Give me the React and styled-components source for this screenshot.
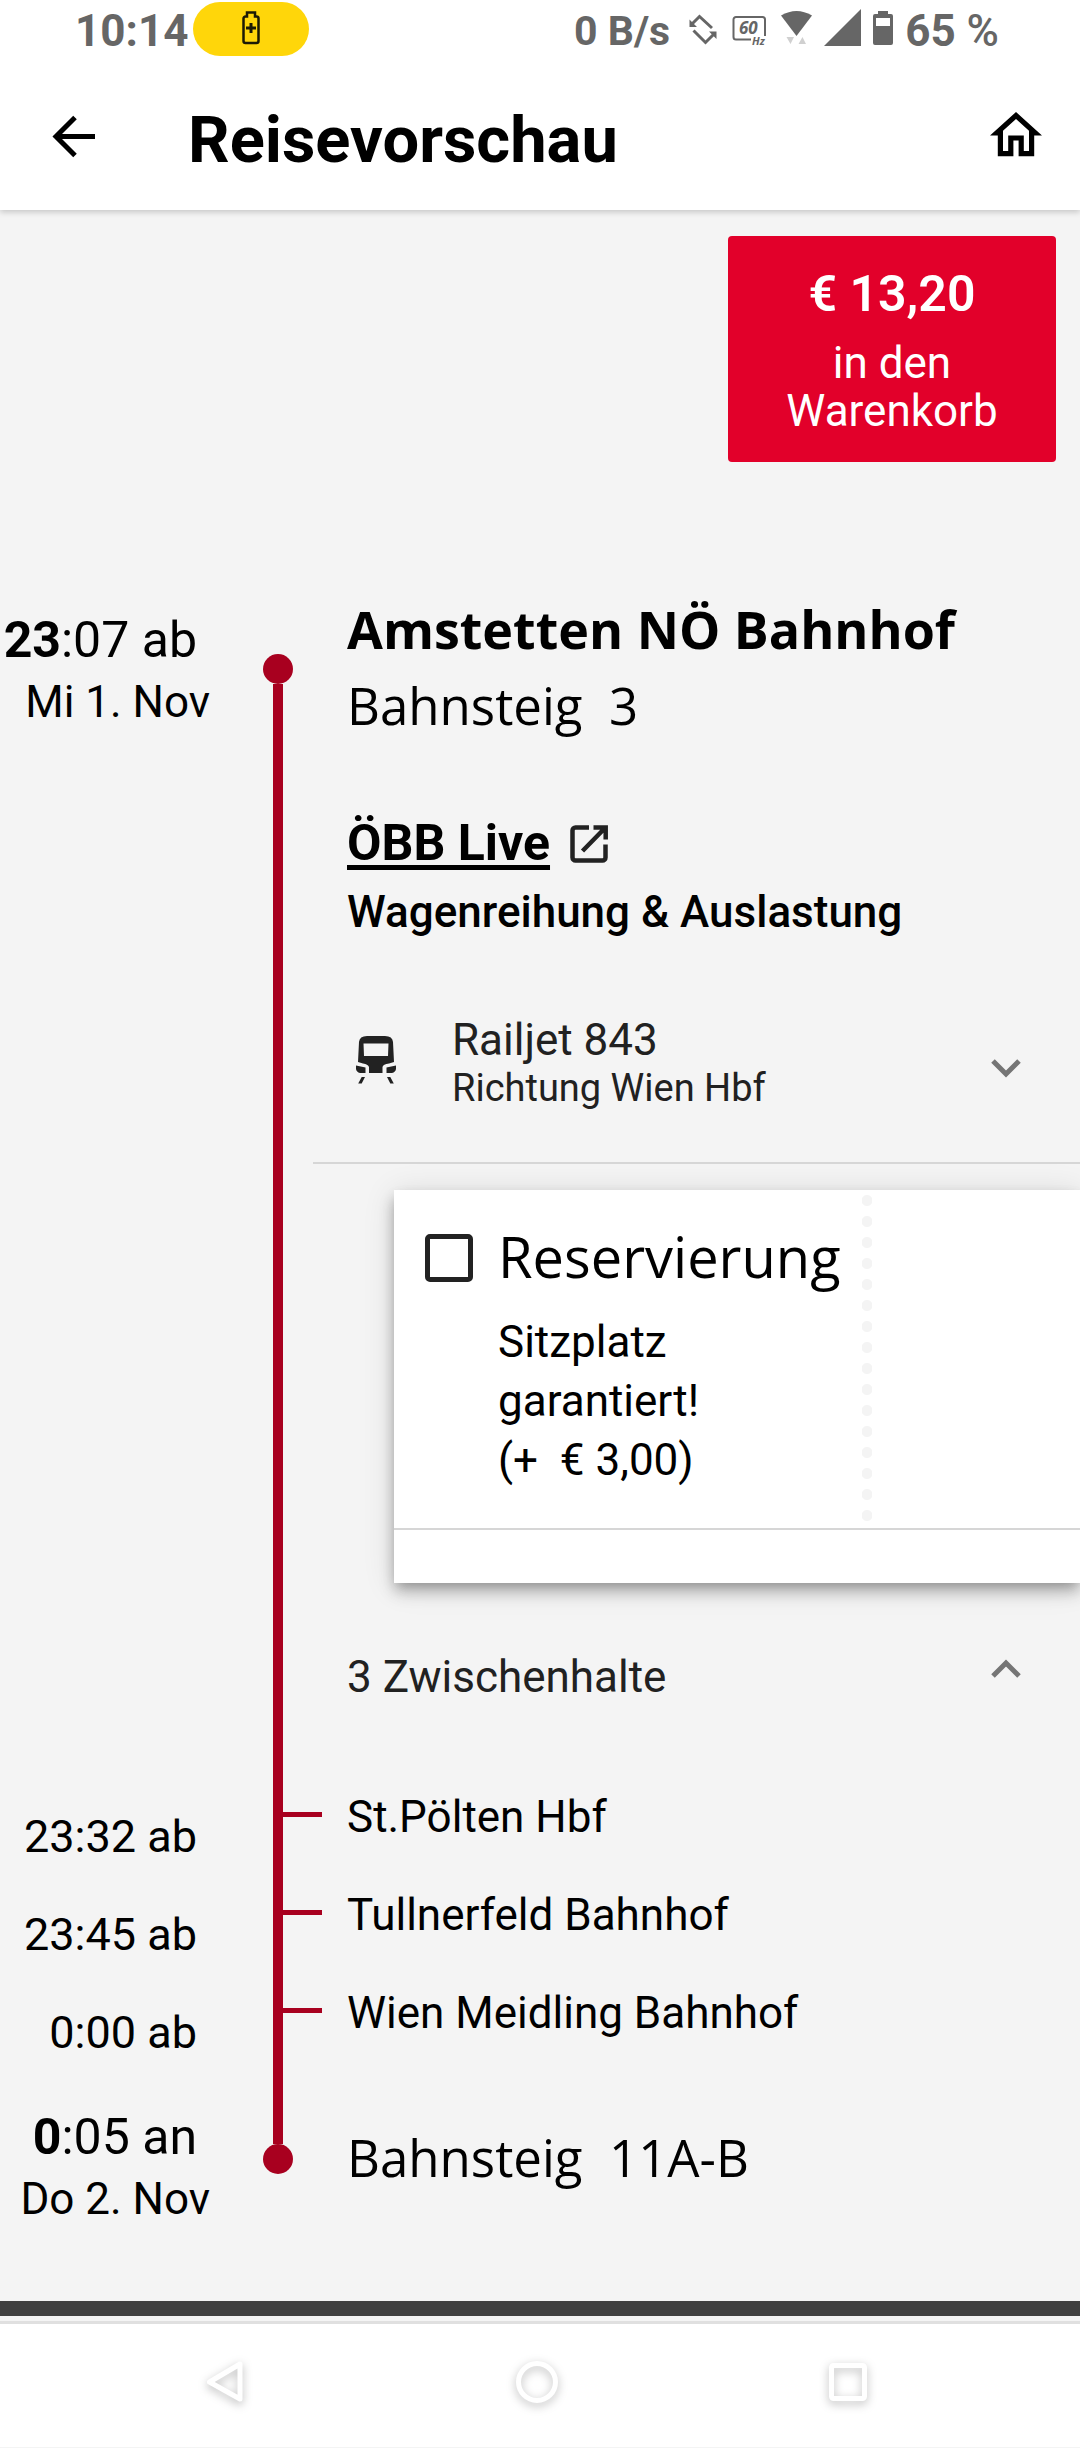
import { useState } from "react"
import styled, { createGlobalStyle } from "styled-components"

const GlobalStyle = createGlobalStyle`
    :root {
        --main-color: #e2002a;
        --line-color: #a8001f;
        --title-color: #000;
        --text-color: #212121;
        --status-color: #666;
        --border-color: #d6d6d6;
        --background: #f4f4f4;
        --heading-font: "Open Sans", "Noto Sans", sans-serif;
    }

    * {
        box-sizing: border-box;
        margin: 0;
        padding: 0;
    }

    body {
        background-color: var(--background);
        color: var(--title-color);
        font-family: Roboto, "Liberation Sans", sans-serif;
        font-size: 44px;
        line-height: 60px;
        overflow-x: hidden;
    }

    button {
        background: none;
        border: none;
        color: inherit;
        font: inherit;
        cursor: pointer;
    }

    svg {
        display: block;
        flex-shrink: 0;
    }
`

const Header = styled.header`
    background-color: #fff;
    box-shadow: 0 2px 6px rgba(0, 0, 0, 0.2);
`

const StatusBar = styled.div`
    height: 60px;
    display: flex;
    justify-content: space-between;
    padding: 2px 81px 0 75px;
    color: var(--status-color);
    line-height: 58px;
    font-weight: 700;
`

const StatusGroup = styled.div`
    display: flex;
    gap: ${({ $gap }) => $gap}px;
`

const Speed = styled.span`
    font-size: 41px;
`

const Percent = styled.span`
    font-weight: 500;
`

const Pill = styled.span`
    width: 116px;
    height: 54px;
    border-radius: 27px;
    background-color: #ffd60a;
    display: flex;
    justify-content: center;
`

const AppBar = styled.div`
    height: 150px;
    display: flex;
    padding: 43px 28px 0 38px;
`

const IconButton = styled.button`
    width: 72px;
    height: 72px;
`

const Title = styled.h1`
    flex: 1;
    padding-left: 78px;
    font-size: 65px;
    line-height: 74px;
    font-weight: 700;
`

const Main = styled.main`
    padding: 26px 0 71px;
`

const CartButton = styled.button`
    width: 328px;
    display: flex;
    flex-direction: column;
    gap: 15px;
    margin: 0 24px 129px auto;
    padding: 28px 48px 27px;
    border-radius: 4px;
    background-color: var(--main-color);
    color: #fff;
    line-height: 48px;
    text-align: center;
`

const Price = styled.span`
    width: 100%;
    font-size: 50px;
    line-height: 60px;
    font-weight: 600;
`

const Row = styled.div`
    display: grid;
    grid-template-columns: 210px 103px minmax(0, 1fr);
    min-height: ${({ $height }) => ($height ? `${$height}px` : "auto")};
`

const TimeCell = styled.div`
    padding-top: ${({ $top }) => $top}px;
    text-align: right;
    white-space: nowrap;
`

const Time = styled.p`
    padding-right: 13px;
    font-size: ${({ $big }) => ($big ? 50 : 45)}px;
    line-height: ${({ $big }) => ($big ? 62 : 60)}px;
`

const DateText = styled.p`
    line-height: 62px;
`

const Rail = styled.div`
    display: flex;
    flex-direction: column;
    align-items: center;
    width: 30px;
    margin-left: 53px;
    padding-top: ${({ $top = 0 }) => $top}px;
`

const StopRail = styled.div`
    display: flex;
    padding-left: 63px;
`

const Dot = styled.span`
    width: 30px;
    height: 30px;
    border-radius: 50%;
    background-color: var(--line-color);
`

const Line = styled.span`
    width: 10px;
    flex: ${({ $length }) => ($length ? `0 0 ${$length}px` : "1")};
    background-color: var(--line-color);
`

const Tick = styled.span`
    flex: 0 0 39px;
    height: 5px;
    margin-top: 25px;
    background-color: var(--line-color);
`

const Content = styled.div`
    padding-top: ${({ $top = 0 }) => $top}px;
`

const Indented = styled.div`
    padding-left: 34px;
`

const Station = styled.h2`
    font-family: var(--heading-font);
    font-size: 52px;
    line-height: 76px;
    font-weight: 700;
`

const Platform = styled.p`
    font-family: var(--heading-font);
    font-size: 51px;
    line-height: 76px;
    font-weight: 400;
    white-space: pre;
`

const LiveRow = styled.div`
    display: flex;
    gap: 18px;
    margin: 70px 0 9px;
`

const LiveLink = styled.a`
    color: inherit;
    font-size: 50px;
    font-weight: 700;
    text-decoration-thickness: 5px;
    text-underline-offset: 5px;
    text-decoration-skip-ink: none;
`

const LiveInfo = styled.p`
    font-weight: 500;
`

const TrainButton = styled.button`
    width: 100%;
    display: flex;
    align-items: center;
    padding: 73px 44px 51px 34px;
    border-bottom: 2px solid var(--border-color);
    color: var(--text-color);
    text-align: left;
`

const TrainText = styled.span`
    flex: 1;
    display: flex;
    flex-direction: column;
    padding-left: 45px;
    line-height: 50px;
`

const Direction = styled.small`
    font-size: 38px;
    line-height: 46px;
`

const Card = styled.section`
    margin: 26px 0 64px 81px;
    padding-bottom: 53px;
    background-color: #fff;
    box-shadow: 0 6px 12px -3px rgba(0, 0, 0, 0.25), 0 10px 15px rgba(0, 0, 0, 0.16), 0 3px 30px rgba(0, 0, 0, 0.12);
`

const CardBody = styled.div`
    display: grid;
    grid-template-columns: 468px 10px 1fr;
    border-bottom: 2px solid var(--border-color);
`

const Option = styled.div`
    display: grid;
    grid-template-columns: 48px 1fr;
    align-items: center;
    column-gap: 25px;
    row-gap: 19px;
    padding: 28px 0 38px 31px;
`

const Checkbox = styled.input`
    appearance: none;
    width: 48px;
    height: 48px;
    margin-top: 4px;
    border: 5px solid #222;
    border-radius: 5px;

    &:checked {
        background-color: #222;
    }
`

const OptionTitle = styled.label`
    font-family: var(--heading-font);
    font-size: 56px;
    line-height: 76px;
    font-weight: 400;
`

const OptionText = styled.div`
    grid-column: 2;
    padding-right: 60px;
    line-height: 59px;
    white-space: pre-wrap;
`

const Perforation = styled.div`
    background: radial-gradient(circle, var(--background) 5px, transparent 6px) repeat-y;
    background-size: 10px 21px;
`

const StopsButton = styled.button`
    width: 100%;
    display: flex;
    justify-content: space-between;
    margin-bottom: 80px;
    padding: 0 44px 0 34px;
    color: var(--text-color);
    text-align: left;
`

const FooterBar = styled.div`
    height: 15px;
    margin-bottom: 5px;
    background-color: #404040;
`

const NavBar = styled.nav`
    height: 126px;
    display: flex;
    justify-content: space-around;
    align-items: center;
    padding: 0 76px 8px 69px;
    border-top: 3px solid #e0e0e0;
    background-color: #fff;
`

const NavIcon = styled.svg`
    overflow: visible;
    fill: none;
    stroke: #fff;
    stroke-width: 5;
    stroke-linejoin: round;
    filter: drop-shadow(0 3px 5px rgba(0, 0, 0, 0.28));
`

const stops = [
    { time: "23:32 ab", name: "St.Pölten Hbf" },
    { time: "23:45 ab", name: "Tullnerfeld Bahnhof" },
    { time: "0:00 ab", name: "Wien Meidling Bahnhof" },
]

function StatusIcons() {
    return (
        <>
            <svg width="38" height="54" fill="none" stroke="#666" strokeWidth="3">
                <path d="M9 23l8.5-8.5L30 26M11.5 28.5l12 12 9-9" />
                <path d="M7.5 17.5V25H15zM34.5 37v-7.5H27z" fill="#666" stroke="none" />
            </svg>
            <svg width="36" height="54" fill="#666" fontFamily="Open Sans, sans-serif" fontStyle="italic" fontWeight="700">
                <path d="M19 37.5H4a2.5 2.5 0 0 1-2.5-2.5V17.5A2.5 2.5 0 0 1 4 15h26.5a2.5 2.5 0 0 1 2.5 2.5V34" fill="none" stroke="#666" strokeWidth="2" />
                <text x="7" y="32" fontSize="17">60</text>
                <text x="20" y="43" fontSize="11">Hz</text>
            </svg>
            <svg width="32" height="54" fill="#666">
                <path d="M1 13.5Q16.5 4.5 32 13.5L16.5 34z" />
                <path d="M6.5 35H14l-3.5 7zM18.5 42H26l-3.5-7z" fill="#d0d0d0" />
            </svg>
            <svg width="37" height="54" fill="#666">
                <path d="M0 44L37 7v37z" />
            </svg>
            <svg width="20" height="54" fill="#666">
                <path fillRule="evenodd" d="M5 9h10v3h3a2 2 0 0 1 2 2v27a2 2 0 0 1-2 2H2a2 2 0 0 1-2-2V14a2 2 0 0 1 2-2h3zM3 16v8h14v-8z" />
            </svg>
        </>
    )
}

function Chevron({ up, y }) {
    return (
        <svg width="60" height="60" fill="none" stroke="#757575" strokeWidth="5">
            <path d={up ? `M17 ${y + 7}l13-13 13 13` : `M17 ${y - 7}l13 13 13-13`} />
        </svg>
    )
}

export default function App() {
    const [reserved, setReserved] = useState(false)
    const [showStops, setShowStops] = useState(true)

    return (
        <>
            <GlobalStyle />
            <Header>
                <StatusBar>
                    <StatusGroup $gap={5}>
                        <span>10:14</span>
                        <Pill>
                            <svg width="20" height="54" fill="none" stroke="#1c1a05" strokeWidth="2.5">
                                <path d="M6 14.5V10.5h8v4h1.5a2 2 0 0 1 2 2V39a2 2 0 0 1-2 2h-11a2 2 0 0 1-2-2V16.5a2 2 0 0 1 2-2z" />
                                <path d="M10 21v10M5 26h10" strokeWidth="3" />
                            </svg>
                        </Pill>
                    </StatusGroup>
                    <StatusGroup $gap={12}>
                        <Speed>0 B/s</Speed>
                        <StatusIcons />
                        <span>65 <Percent>%</Percent></span>
                    </StatusGroup>
                </StatusBar>
                <AppBar>
                    <IconButton aria-label="Zurück">
                        <svg width="72" height="72" fill="none" stroke="#000" strokeWidth="5">
                            <path d="M37 14.5L18 33.5l19 19M18 33.5h39" />
                        </svg>
                    </IconButton>
                    <Title>Reisevorschau</Title>
                    <IconButton aria-label="Startseite">
                        <svg width="72" height="72">
                            <path transform="translate(4.8 1.2) scale(2.6)" d="M12 5.69l5 4.5V18h-2v-6H9v6H7v-7.81l5-4.5M12 3L2 12h3v8h6v-6h2v6h6v-8h3z" />
                        </svg>
                    </IconButton>
                </AppBar>
            </Header>

            <Main>
                <CartButton>
                    <Price>€ 13,20</Price>
                    <span>in den Warenkorb</span>
                </CartButton>

                <Row>
                    <TimeCell $top={18}>
                        <Time $big><b>23</b>:07 ab</Time>
                        <DateText>Mi 1. Nov</DateText>
                    </TimeCell>
                    <Rail $top={63}>
                        <Dot />
                        <Line />
                    </Rail>
                    <Content>
                        <Indented>
                            <Station>Amstetten NÖ Bahnhof</Station>
                            <Platform>Bahnsteig{"  "}3</Platform>
                            <LiveRow>
                                <LiveLink href="#live">ÖBB Live</LiveLink>
                                <svg width="42" height="60" fill="none" stroke="#222" strokeWidth="4.5">
                                    <path d="M21 14.5H7.5a3 3 0 0 0-3 3v27a3 3 0 0 0 3 3h27a3 3 0 0 0 3-3V31.5" />
                                    <path d="M25.5 14.5h12.2v12M37 15L14.5 38" />
                                </svg>
                            </LiveRow>
                            <LiveInfo>Wagenreihung &amp; Auslastung</LiveInfo>
                        </Indented>

                        <TrainButton aria-expanded="false">
                            <svg width="60" height="60" viewBox="0 1 60 60" fill="#222">
                                <path fillRule="evenodd" d="M12 10q.5-6 8-6h18q7.5 0 8 6l1 20-5 1.5q-6 .5-6.5 3.5v6H22v-6q-1-3-6-3.5L11 30zM16.5 11.5L17 24h24l.5-12.500z" />
                                <path d="M9 33.5l9.5 2V41H13q-3.5-1-4-4zM49 33.5l-9.5 2V41H45q3.5-1 4-4zM14.7 45H18l-3.3 6.5h-3.5zM43.3 45H40l3.3 6.5h3.5z" />
                            </svg>
                            <TrainText>
                                Railjet 843
                                <Direction>Richtung Wien Hbf</Direction>
                            </TrainText>
                            <Chevron y={35} />
                        </TrainButton>

                        <Card>
                            <CardBody>
                                <Option>
                                    <Checkbox
                                        id="reservierung"
                                        type="checkbox"
                                        checked={reserved}
                                        onChange={(e) => setReserved(e.target.checked)}
                                    />
                                    <OptionTitle htmlFor="reservierung">Reservierung</OptionTitle>
                                    <OptionText>
                                        <p>Sitzplatz garantiert!</p>
                                        <p>(+{"  "}€ 3,00)</p>
                                    </OptionText>
                                </Option>
                                <Perforation />
                            </CardBody>
                        </Card>

                        <StopsButton aria-expanded={showStops} onClick={() => setShowStops(!showStops)}>
                            3 Zwischenhalte
                            <Chevron up={showStops} y={22} />
                        </StopsButton>
                    </Content>
                </Row>

                {showStops && stops.map((stop) => (
                    <Row key={stop.name} $height={98}>
                        <TimeCell $top={20}>
                            <Time>{stop.time}</Time>
                        </TimeCell>
                        <StopRail>
                            <Line $length={10} />
                            <Tick />
                        </StopRail>
                        <Indented>{stop.name}</Indented>
                    </Row>
                ))}

                <Row>
                    <TimeCell $top={25}>
                        <Time $big><b>0</b>:05 an</Time>
                        <DateText>Do 2. Nov</DateText>
                    </TimeCell>
                    <Rail>
                        <Line $length={63} />
                        <Dot />
                    </Rail>
                    <Content $top={38}>
                        <Indented>
                            <Platform>Bahnsteig{"  "}11A-B</Platform>
                        </Indented>
                    </Content>
                </Row>
            </Main>

            <FooterBar />
            <NavBar>
                <IconButton aria-label="Zurück">
                    <NavIcon width="72" height="72">
                        <path d="M51 18v35L20.5 36z" />
                    </NavIcon>
                </IconButton>
                <IconButton aria-label="Home">
                    <NavIcon width="72" height="72">
                        <circle cx="37" cy="36" r="18.5" />
                    </NavIcon>
                </IconButton>
                <IconButton aria-label="Übersicht">
                    <NavIcon width="72" height="72">
                        <rect x="19.5" y="19.5" width="33" height="33" rx="2" />
                    </NavIcon>
                </IconButton>
            </NavBar>
        </>
    )
}
